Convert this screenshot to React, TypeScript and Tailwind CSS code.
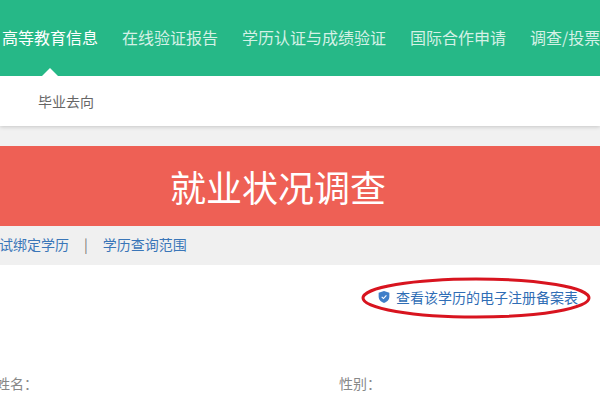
export default function App() {
  const cjk = '"Noto Sans CJK SC", "Liberation Sans", sans-serif';
  const nav = ["在线验证报告", "学历认证与成绩验证", "国际合作申请", "调查/投票"];
  return (
    <div className="relative h-[400px] w-[600px] overflow-hidden bg-[#f1f1f1]" style={{ fontFamily: cjk }}>
      <header className="relative flex h-[76px] items-start bg-[#26b887] pl-[2px] pt-[25px] text-[16px] leading-[24px] whitespace-nowrap text-[#d4f1e6]">
        <span className="text-white">高等教育信息</span>
        {nav.map((n) => (
          <span key={n} className="ml-[24px] shrink-0">{n}</span>
        ))}
        <span className="absolute bottom-0 left-[42px] h-0 w-0 border-x-[8px] border-b-[8px] border-x-transparent border-b-white" />
      </header>
      <div className="flex h-[50px] items-center bg-white pl-[38px] text-[14px] text-[#666666] shadow-[0_1px_4px_rgba(0,0,0,0.18)]">
        毕业去向
      </div>
      <div className="mt-[20px] flex h-[80px] items-center bg-[#ee6055] pl-[170px] text-[36px] whitespace-nowrap text-white">
        就业状况调查
      </div>
      <div className="flex h-[39px] items-start whitespace-nowrap bg-[#f0f0f0] pt-[8px] text-[14px] leading-[20px] text-[#3a76b8]">
        <span className="-ml-[1px]">试绑定学历</span>
        <span className="ml-[15px] mr-[15px] text-[#777777]">|</span>
        <span>学历查询范围</span>
      </div>
      <div className="relative h-[135px] bg-white">
        <div className="flex justify-end pr-[22px] pt-[23px]">
          <div className="flex items-center gap-[6px] text-[14px] leading-[18px] whitespace-nowrap text-[#2f6db5]">
            <svg width="12" height="14" viewBox="0 0 13 14" aria-hidden="true">
              <path d="M6.5 0.5 L12.3 2.4 V7 C12.3 10.2 9.6 12.4 6.5 13.6 C3.4 12.4 0.7 10.2 0.7 7 V2.4 Z" fill="#3f7fc9" />
              <path d="M4 6.8 L5.9 8.7 L9.1 5.3" fill="none" stroke="#ffffff" strokeWidth="1.2" />
            </svg>
            <span>查看该学历的电子注册备案表</span>
          </div>
        </div>
        <svg className="absolute left-[360px] top-[11px]" width="232" height="44" viewBox="0 0 232 44" aria-hidden="true">
          <ellipse cx="116" cy="22" rx="113" ry="19" fill="none" stroke="#d8141f" strokeWidth="3" />
        </svg>
        <div className="mt-[67px] flex text-[14px] leading-[20px] text-[#888888]">
          <span className="-ml-[4px] w-[343px]">姓名：</span>
          <span>性别：</span>
        </div>
      </div>
    </div>
  );
}
